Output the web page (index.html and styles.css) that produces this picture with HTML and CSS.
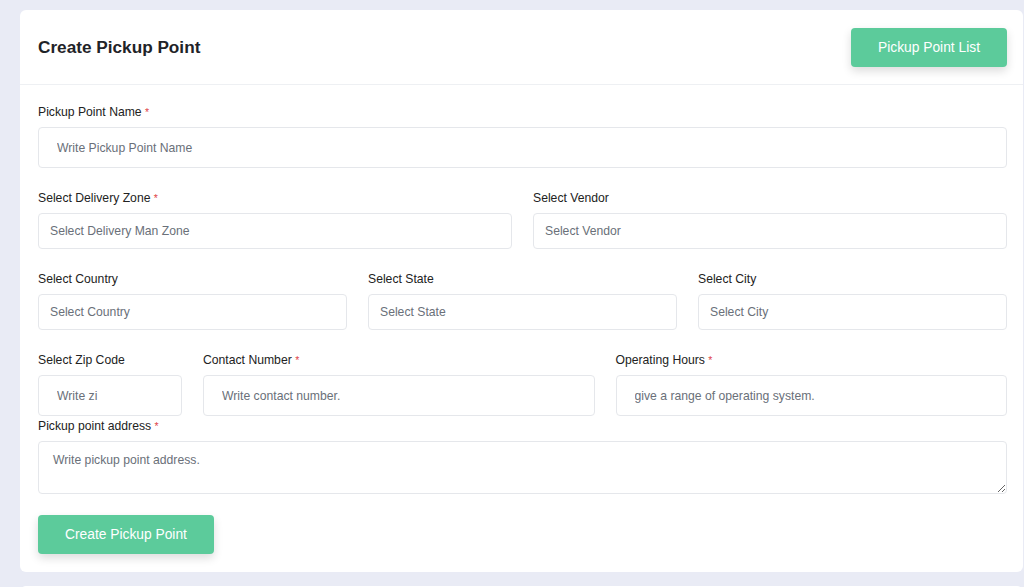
FILE: index.html
```html
<!DOCTYPE html>
<html lang="en">
  <head>
    <meta charset="UTF-8" />
    <meta name="viewport" content="width=device-width, initial-scale=1.0" />
    <title>Create Pickup Point</title>
    <link rel="stylesheet" href="styles.css">
  </head>
  <body>
    <div class="page">
      <div class="card">
        <div class="card-header">
          <h1>Create Pickup Point</h1>
          <button type="button" class="btn">Pickup Point List</button>
        </div>

        <form class="card-body">
          <div class="field">
            <label for="pointName">Pickup Point Name <span class="req">*</span></label>
            <input type="text" id="pointName" class="big pad-lg" placeholder="Write Pickup Point Name" />
          </div>

          <div class="row two">
            <div class="field">
              <label for="zone">Select Delivery Zone <span class="req">*</span></label>
              <input type="text" id="zone" placeholder="Select Delivery Man Zone" />
            </div>
            <div class="field">
              <label for="vendor">Select Vendor</label>
              <input type="text" id="vendor" placeholder="Select Vendor" />
            </div>
          </div>

          <div class="row three">
            <div class="field">
              <label for="country">Select Country</label>
              <input type="text" id="country" placeholder="Select Country" />
            </div>
            <div class="field">
              <label for="state">Select State</label>
              <input type="text" id="state" placeholder="Select State" />
            </div>
            <div class="field">
              <label for="city">Select City</label>
              <input type="text" id="city" placeholder="Select City" />
            </div>
          </div>

          <div class="row four">
            <div class="field">
              <label for="zip">Select Zip Code</label>
              <input type="text" id="zip" class="big pad-lg" placeholder="Write zi" />
            </div>
            <div class="field">
              <label for="contact">Contact Number <span class="req">*</span></label>
              <input type="tel" id="contact" class="big pad-lg" placeholder="Write contact number." />
            </div>
            <div class="field">
              <label for="hours">Operating Hours <span class="req">*</span></label>
              <input type="text" id="hours" class="big pad-lg" placeholder="give a range of operating system." />
            </div>
          </div>

          <div class="field address">
            <label for="address">Pickup point address <span class="req">*</span></label>
            <textarea id="address" placeholder="Write pickup point address."></textarea>
          </div>

          <button type="submit" class="btn submit">Create Pickup Point</button>
        </form>
      </div>
      <div class="card next"></div>
    </div>
  </body>
</html>
```

FILE: styles.css
```css
body {
  margin: 0;
  font-family: "Liberation Sans", Arial, sans-serif;
  background-color: #e9ebf5;
  height: 587px;
  overflow: hidden;
}

.page {
  padding: 10px 1px 0 20px;
}

.card {
  background-color: #fff;
  border-radius: 6px;
}

.card.next {
  margin-top: 14px;
  height: 30px;
}

.card-header {
  display: flex;
  justify-content: space-between;
  align-items: center;
  height: 75px;
  padding: 0 16px 0 18px;
  border-bottom: 1px solid #eef0f3;
  box-sizing: border-box;
}

h1 {
  margin: 0;
  font-size: 17.2px;
  font-weight: bold;
  color: #1f2328;
}

.btn {
  font-family: "Liberation Sans", Arial, sans-serif;
  height: 39px;
  padding: 0 27px;
  font-size: 13.8px;
  color: #fff;
  background-color: #5ccb9b;
  border: none;
  border-radius: 4px;
  box-shadow: 0 4px 10px rgba(0, 0, 0, 0.14);
  cursor: pointer;
}

.card-body {
  padding: 19px 16px 18px 18px;
}

.field {
  display: flex;
  flex-direction: column;
}

label {
  font-size: 12.2px;
  line-height: 16px;
  color: #222;
  margin-bottom: 7px;
}

.req {
  color: #e0464a;
  font-size: 10.5px;
}

input,
textarea {
  font-family: "Liberation Sans", Arial, sans-serif;
  font-size: 12.2px;
  color: #333;
  height: 36px;
  padding: 0 11px;
  border: 1px solid #e5e7eb;
  border-radius: 4px;
  box-sizing: border-box;
  width: 100%;
  outline: none;
}

input::placeholder,
textarea::placeholder {
  color: #6a7079;
}

input.big {
  height: 41px;
}

input.pad-lg {
  padding: 0 18px;
}

.row {
  display: grid;
  column-gap: 21px;
}

.field + .row {
  margin-top: 22px;
}

.row + .row {
  margin-top: 22px;
}

.row.two {
  grid-template-columns: 1fr 1fr;
}

.row.three {
  grid-template-columns: 1fr 1fr 1fr;
}

.row.four {
  grid-template-columns: 144px 1fr 1fr;
}

.address {
  margin-top: 2px;
}

textarea {
  height: 53px;
  padding: 11px 14px;
  resize: vertical;
}

.submit {
  margin-top: 21px;
  height: 39px;
  padding: 0 27px;
}
```
